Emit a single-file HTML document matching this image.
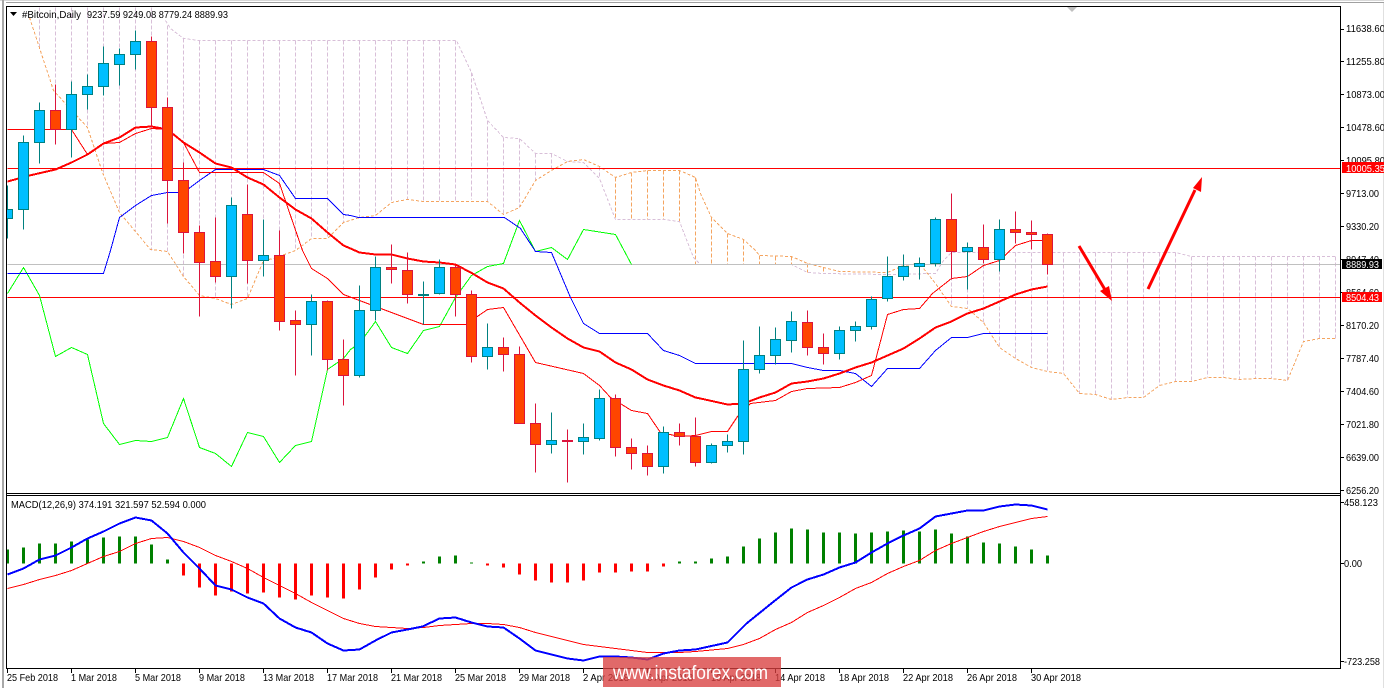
<!DOCTYPE html>
<html>
<head>
<meta charset="utf-8">
<title>Bitcoin Daily</title>
<style>
html,body{margin:0;padding:0;background:#fff;width:1384px;height:688px;overflow:hidden}
svg{display:block}
text{font-family:"Liberation Sans",sans-serif;font-size:10.5px;fill:#000}
.l{fill:none}
</style>
</head>
<body>
<svg width="1384" height="688" viewBox="0 0 1384 688" xmlns="http://www.w3.org/2000/svg">
<defs>
<clipPath id="m"><rect x="7" y="7" width="1333" height="486"/></clipPath>
<clipPath id="d"><rect x="7" y="496" width="1333" height="172"/></clipPath>
</defs>
<rect width="1384" height="688" fill="#fff"/>
<rect x="0" y="0" width="1384" height="1" fill="#d8d8d8"/>
<rect x="6" y="2" width="1378" height="1" fill="#a0a0a0"/>
<rect x="2" y="0" width="2" height="688" fill="#a8a8a8"/>
<rect x="1383" y="3" width="1" height="685" fill="#e0e0e0"/>

<g clip-path="url(#m)">
<g transform="translate(.5 .5)" shape-rendering="crispEdges">
<!-- cloud hatch -->
<path class="l" stroke="#d8bfd8" stroke-dasharray="4 2" d="M39 7V47M55 7V93M71 7V110M87 7V127M103 7V172M119 7V212M135 7V231M151 7V250M167 25V251M183 38V276M199 40V295M215 40V298M231 40V304M247 40V298M263 40V260M279 40V253M295 40V250M311 40V238M327 40V238M343 40V222M359 40V217M375 40V215M391 40V202M407 40V199M423 40V201M439 40V201M455 40V201M471 72V199M487 120V201M503 137V214M519 138V207M535 153V180M551 153V170M599 166V178M951 252V306M967 252V308M983 252V322M999 252V347M1015 252V358M1031 252V367M1047 252V371M1063 252V373M1079 252V393M1095 252V394M1111 252V399M1127 252V397M1143 252V397M1159 252V385M1175 252V381M1191 256V381M1207 256V377M1223 256V377M1239 256V379M1255 256V378M1271 256V378M1287 256V380M1303 256V341M1319 256V338M1335 256V338"/>
<path class="l" stroke="#f4a460" stroke-dasharray="4 2" d="M615 177V219M631 172V219M647 170V219M663 170V219M679 170V222M695 177V264M711 217V264M727 233V264M743 239V264M759 255V264M775 256V264M791 256V264M807 263V272M823 267V273"/>
<!-- senkou B -->
<polyline class="l" stroke="#d8bfd8" stroke-dasharray="3 2" points="165,20 170,28 183,38 199,40 456,40 471,72 487,120 503,137 519,138 535,153 551,153 567,161 583,162 599,178 615,219 663,219 679,221 693,257 700,264 791,264 807,272 823,273 887,274 935,273 943,260 951,252 1175,252 1191,256 1335,256"/>
<!-- senkou A -->
<polyline class="l" stroke="#f4a460" stroke-dasharray="3 2" points="29,17 53,90 87,127 102,172 119,212 150,249 167,251 183,276 199,295 215,298 231,304 247,298 263,260 273,258 295,250 311,238 327,238 343,222 359,217 375,215 391,202 407,199 423,201 487,201 503,214 519,207 535,180 551,170 567,161 583,159 599,166 615,177 631,172 647,170 679,170 695,177 700,193 711,217 727,233 743,239 755,250 759,255 791,256 807,263 823,267 839,271 887,272 903,265 919,263 935,283 951,306 967,308 983,322 999,347 1015,358 1031,367 1047,371 1063,373 1079,393 1095,394 1111,399 1127,397 1143,397 1159,385 1175,381 1191,381 1207,377 1223,377 1239,379 1255,378 1271,378 1287,380 1303,341 1319,338 1335,338"/>
<!-- horizontal lines -->
<path class="l" stroke="#c0c0c0" d="M7 264H1340"/>
<path class="l" stroke="#ff0000" d="M7 168H1340M7 297H1340"/>
<!-- chikou -->
<polyline class="l" stroke="#00ff00" points="7,293 23,267 39,295 55,356 71,347 87,354 103,423 119,444 135,440 151,441 167,437 183,398 199,447 215,453 231,466 247,432 263,436 279,462 295,445 311,441 327,369 343,358 350,349 359,343 375,321 391,347 407,353 423,330 439,326 455,297 471,275 487,266 503,263 519,220 535,251 551,247 567,259 583,229 615,234 631,264"/>
<!-- kijun -->
<polyline class="l" stroke="#0000ff" points="7,273 103,273 110,250 119,217 135,205 151,195 167,192 183,192 199,180 215,169 263,169 279,175 295,198 327,198 343,214 350,215 358,217 504,217 520,228 535,251 551,252 570,297 583,323 599,333 647,333 663,350 679,355 695,363 791,363 807,367 823,370 839,370 855,373 871,386 887,368 919,368 935,350 951,337 967,337 983,333 1047,333"/>
<!-- tenkan -->
<polyline class="l" stroke="#ff0000" points="7,129 71,129 87,154 103,143 119,142 135,133 151,128 167,129 183,142 199,172 263,172 279,183 302,250 311,268 327,278 343,294 423,324 470,324 471,320 487,309 503,307 535,362 583,373 599,385 610,397 631,410 647,413 660,432 679,436 695,435 711,431 727,431 737,416 750,403 775,400 791,391 807,388 839,387 855,382 871,375 887,314 903,309 919,308 932,293 951,278 967,276 983,265 999,260 1015,245 1031,240 1047,240"/>
<!-- MA -->
<polyline class="l" stroke="#ff0000" stroke-width="2" points="7,181 29,175 55,169 71,162 87,154 103,143 119,137 135,127 151,126 167,129 183,142 199,152 215,163 231,167 247,177 263,184 279,197 295,209 311,218 327,232 343,245 350,248 359,252 375,254 391,254 407,258 423,261 439,262 455,264 472,273 487,282 503,288 519,302 535,315 551,327 567,338 583,347 599,351 615,362 631,369 647,379 663,385 679,390 695,397 700,398 727,404 743,403 759,397 775,392 791,383 807,381 823,378 839,373 855,367 871,362 887,355 903,348 919,338 935,327 951,321 967,313 983,308 999,301 1015,294 1031,289 1047,286"/>
<!-- candles wicks -->
<path class="l" stroke="#008080" d="M7 185V238M23 135V229M39 102V163M71 81V157M87 74V109M103 46V95M119 48V85M135 30V69M231 197V308M263 219V276M311 294V355M359 285V377M375 256V320M423 281V324M439 259V294M487 323V369M551 412V453M583 423V454M599 389V440M663 426V473M711 443V463M727 434V452M743 340V454M759 326V373M775 327V364M791 311V352M839 326V359M855 321V341M871 296V329M887 256V301M903 254V280M919 257V279M935 217V266M967 242V289M999 219V271"/>
<path class="l" stroke="#dc143c" d="M55 84V144M151 36V127M167 97V223M183 162V253M199 225V316M215 217V282M247 184V283M279 230V330M295 310V375M327 300V370M343 339V405M391 244V283M407 252V303M455 265V316M471 290V362M503 337V371M519 346V423M535 403V472M567 429V482M615 394V456M631 438V469M647 445V475M679 423V445M695 417V466M807 310V355M823 333V364M951 193V279M983 224V263M1015 211V243M1031 220V249M1047 233V274"/>
<!-- candle bodies -->
<path fill="#00bfff" stroke="#008080" d="M2 209h10V218h-10zM18 142h10V209h-10zM34 110h10V142h-10zM66 94h10V129h-10zM82 86h10V94h-10zM98 63h10V86h-10zM114 54h10V64h-10zM130 41h10V54h-10zM226 205h10V276h-10zM258 255h10V260h-10zM306 301h10V324h-10zM354 310h10V375h-10zM370 267h10V310h-10zM418 294h10V295h-10zM434 267h10V293h-10zM482 347h10V356h-10zM546 440h10V444h-10zM578 437h10V441h-10zM594 398h10V438h-10zM658 432h10V466h-10zM706 445h10V462h-10zM722 441h10V445h-10zM738 369h10V441h-10zM754 355h10V369h-10zM770 339h10V355h-10zM786 321h10V340h-10zM834 330h10V353h-10zM850 326h10V330h-10zM866 299h10V326h-10zM882 276h10V298h-10zM898 266h10V276h-10zM914 263h10V266h-10zM930 219h10V263h-10zM962 247h10V251h-10zM994 229h10V259h-10z"/>
<path fill="#ff4500" stroke="#dc143c" d="M50 110h10V129h-10zM146 41h10V107h-10zM162 107h10V180h-10zM178 180h10V232h-10zM194 232h10V262h-10zM210 261h10V276h-10zM242 214h10V260h-10zM274 255h10V321h-10zM290 320h10V324h-10zM322 301h10V359h-10zM338 359h10V375h-10zM386 267h10V269h-10zM402 270h10V294h-10zM450 267h10V294h-10zM466 294h10V356h-10zM498 347h10V354h-10zM514 354h10V423h-10zM530 423h10V444h-10zM562 440h10V441h-10zM610 398h10V447h-10zM626 447h10V453h-10zM642 453h10V466h-10zM674 432h10V436h-10zM690 436h10V462h-10zM802 322h10V347h-10zM818 347h10V353h-10zM946 219h10V251h-10zM978 247h10V259h-10zM1010 229h10V232h-10zM1026 232h10V234h-10zM1042 234h10V264h-10z"/>
</g>
<!-- shift marker -->
<path d="M1067 7h10l-5 5z" fill="#c0c0c0"/>
<!-- arrows -->
<path class="l" stroke="#ff0000" stroke-width="3" d="M1079 246L1107 293M1148 289L1195 190"/>
<path fill="#ff0000" d="M1112 301L1100 291L1109 286zM1202 177L1193 188L1201 192z"/>
</g>

<!-- MACD -->
<g clip-path="url(#d)">
<g transform="translate(.5 .5)" shape-rendering="crispEdges">
<path class="l" stroke="#008000" stroke-width="3" d="M7 549V563M23 547V563M39 543V563M55 543V563M71 541V563M87 539V563M103 537V563M119 536V563M135 536V563M151 544V563M167 559V563M423 561V563M439 556V563M455 555V563M471 562V563M679 561V563M695 561V563M711 558V563M727 556V563M743 546V563M759 538V563M775 532V563M791 528V563M807 529V563M823 532V563M839 532V563M855 533V563M871 532V563M887 531V563M903 530V563M919 531V563M935 529V563M951 533V563M967 536V563M983 542V563M999 543V563M1015 546V563M1031 549V563M1047 555V563"/>
<path class="l" stroke="#ff0000" stroke-width="3" d="M183 563V575M199 563V587M215 563V595M231 563V591M247 563V593M263 563V592M279 563V597M295 563V599M311 563V595M327 563V597M343 563V598M359 563V589M375 563V577M391 563V569M407 563V565M487 563V565M503 563V567M519 563V574M535 563V580M551 563V582M567 563V582M583 563V580M599 563V572M615 563V572M631 563V571M647 563V571M663 563V566"/>
<polyline class="l" stroke="#ff0000" points="7,588 23,584 39,579 55,575 71,570 87,563 103,556 119,551 135,543 151,538 167,537 183,541 199,547 215,555 231,561 247,568 263,577 279,585 295,593 311,602 327,610 343,618 359,623 375,626 391,627 407,628 423,627 439,625 455,624 471,623 487,623 503,624 519,627 535,632 551,636 567,640 583,644 599,646 615,648 631,650 647,652 663,652 679,652 695,651 727,648 743,644 759,638 775,629 791,622 807,612 823,605 839,597 855,588 871,582 887,573 903,566 919,560 935,550 951,543 967,537 983,531 999,526 1015,522 1031,518 1047,516"/>
<polyline class="l" stroke="#0000ff" stroke-width="2" points="7,574 23,568 39,559 55,555 71,547 87,538 103,531 119,523 135,517 151,520 167,533 183,552 199,568 215,585 231,589 247,597 263,603 279,618 295,627 311,632 327,643 343,650 359,649 375,640 391,632 407,629 422,626 439,618 455,617 471,622 487,626 503,627 519,638 535,650 551,654 567,658 583,660 599,656 615,656 631,657 647,659 663,653 679,650 695,649 727,642 746,623 772,602 791,587 807,579 823,574 839,567 855,562 871,552 887,543 903,535 919,528 935,516 951,513 967,510 983,510 999,506 1015,504 1031,505 1047,509"/>
</g>
</g>

<!-- frames -->
<g fill="#000">
<rect x="6" y="6" width="1335" height="1"/>
<rect x="6" y="493" width="1335" height="1"/>
<rect x="6" y="495" width="1335" height="1"/>
<rect x="6" y="668" width="1335" height="1"/>
<rect x="6" y="6" width="1" height="663"/>
<rect x="1340" y="6" width="1" height="663"/>
<!-- price ticks -->
<path d="M1341 29h3v1h-3zM1341 61h3v1h-3zM1341 94h3v1h-3zM1341 127h3v1h-3zM1341 160h3v1h-3zM1341 193h3v1h-3zM1341 226h3v1h-3zM1341 259h3v1h-3zM1341 292h3v1h-3zM1341 325h3v1h-3zM1341 358h3v1h-3zM1341 391h3v1h-3zM1341 424h3v1h-3zM1341 457h3v1h-3zM1341 490h3v1h-3zM1341 502h3v1h-3zM1341 563h3v1h-3zM1341 661h3v1h-3z"/>
<!-- time ticks -->
<path d="M7 669h1v4h-1zM71 669h1v4h-1zM135 669h1v4h-1zM199 669h1v4h-1zM263 669h1v4h-1zM327 669h1v4h-1zM391 669h1v4h-1zM455 669h1v4h-1zM519 669h1v4h-1zM583 669h1v4h-1zM647 669h1v4h-1zM711 669h1v4h-1zM775 669h1v4h-1zM839 669h1v4h-1zM903 669h1v4h-1zM967 669h1v4h-1zM1031 669h1v4h-1z"/>
</g>

<!-- titles -->
<path d="M10 12h7l-3.500 4z" fill="#000"/>
<text x="22" y="18" textLength="59" lengthAdjust="spacingAndGlyphs">#Bitcoin,Daily</text>
<text x="87" y="18" textLength="141" lengthAdjust="spacingAndGlyphs">9237.59 9249.08 8779.24 8889.93</text>
<text x="11" y="508" textLength="195" lengthAdjust="spacingAndGlyphs">MACD(12,26,9) 374.191 321.597 52.594 0.000</text>

<!-- price labels -->
<g>
<text x="1346" y="32" textLength="39" lengthAdjust="spacingAndGlyphs">11638.60</text>
<text x="1346" y="65" textLength="39" lengthAdjust="spacingAndGlyphs">11255.80</text>
<text x="1346" y="98" textLength="39" lengthAdjust="spacingAndGlyphs">10873.00</text>
<text x="1346" y="131" textLength="39" lengthAdjust="spacingAndGlyphs">10478.60</text>
<text x="1346" y="164" textLength="39" lengthAdjust="spacingAndGlyphs">10095.80</text>
<text x="1346" y="197" textLength="33" lengthAdjust="spacingAndGlyphs">9713.00</text>
<text x="1346" y="230" textLength="33" lengthAdjust="spacingAndGlyphs">9330.20</text>
<text x="1346" y="263" textLength="33" lengthAdjust="spacingAndGlyphs">8947.40</text>
<text x="1346" y="296" textLength="33" lengthAdjust="spacingAndGlyphs">8564.60</text>
<text x="1346" y="329" textLength="33" lengthAdjust="spacingAndGlyphs">8170.20</text>
<text x="1346" y="362" textLength="33" lengthAdjust="spacingAndGlyphs">7787.40</text>
<text x="1346" y="395" textLength="33" lengthAdjust="spacingAndGlyphs">7404.60</text>
<text x="1346" y="428" textLength="33" lengthAdjust="spacingAndGlyphs">7021.80</text>
<text x="1346" y="461" textLength="33" lengthAdjust="spacingAndGlyphs">6639.00</text>
<text x="1346" y="494" textLength="33" lengthAdjust="spacingAndGlyphs">6256.20</text>
<text x="1344" y="506" textLength="34" lengthAdjust="spacingAndGlyphs">458.123</text>
<text x="1344" y="567" textLength="18" lengthAdjust="spacingAndGlyphs">0.00</text>
<text x="1344" y="665" textLength="36" lengthAdjust="spacingAndGlyphs">-723.258</text>
</g>

<!-- price tags -->
<rect x="1342" y="162" width="42" height="11" fill="#ff0000"/>
<text x="1346" y="172" textLength="39" lengthAdjust="spacingAndGlyphs" style="fill:#fff">10005.35</text>
<rect x="1342" y="259" width="40" height="10" fill="#000"/>
<text x="1346" y="268" textLength="33" lengthAdjust="spacingAndGlyphs" style="fill:#fff">8889.93</text>
<rect x="1342" y="292" width="40" height="10" fill="#ff0000"/>
<text x="1346" y="301" textLength="33" lengthAdjust="spacingAndGlyphs" style="fill:#fff">8504.43</text>

<!-- dates -->
<g>
<text x="7" y="681" textLength="51" lengthAdjust="spacingAndGlyphs">25 Feb 2018</text>
<text x="71" y="681" textLength="46" lengthAdjust="spacingAndGlyphs">1 Mar 2018</text>
<text x="135" y="681" textLength="46" lengthAdjust="spacingAndGlyphs">5 Mar 2018</text>
<text x="199" y="681" textLength="46" lengthAdjust="spacingAndGlyphs">9 Mar 2018</text>
<text x="263" y="681" textLength="51" lengthAdjust="spacingAndGlyphs">13 Mar 2018</text>
<text x="327" y="681" textLength="51" lengthAdjust="spacingAndGlyphs">17 Mar 2018</text>
<text x="391" y="681" textLength="51" lengthAdjust="spacingAndGlyphs">21 Mar 2018</text>
<text x="455" y="681" textLength="51" lengthAdjust="spacingAndGlyphs">25 Mar 2018</text>
<text x="519" y="681" textLength="51" lengthAdjust="spacingAndGlyphs">29 Mar 2018</text>
<text x="583" y="681" textLength="46" lengthAdjust="spacingAndGlyphs">2 Apr 2018</text>
<text x="647" y="681" textLength="46" lengthAdjust="spacingAndGlyphs">6 Apr 2018</text>
<text x="711" y="681" textLength="50" lengthAdjust="spacingAndGlyphs">10 Apr 2018</text>
<text x="775" y="681" textLength="50" lengthAdjust="spacingAndGlyphs">14 Apr 2018</text>
<text x="839" y="681" textLength="50" lengthAdjust="spacingAndGlyphs">18 Apr 2018</text>
<text x="903" y="681" textLength="50" lengthAdjust="spacingAndGlyphs">22 Apr 2018</text>
<text x="967" y="681" textLength="50" lengthAdjust="spacingAndGlyphs">26 Apr 2018</text>
<text x="1031" y="681" textLength="50" lengthAdjust="spacingAndGlyphs">30 Apr 2018</text>
</g>

<!-- watermark -->
<rect x="603" y="657" width="178" height="30" fill="#d93f3f" fill-opacity=".78"/>
<text x="613" y="679" textLength="155" lengthAdjust="spacingAndGlyphs" style="font-size:19px;fill:#fff">www.instaforex.com</text>
</svg>
</body>
</html>
